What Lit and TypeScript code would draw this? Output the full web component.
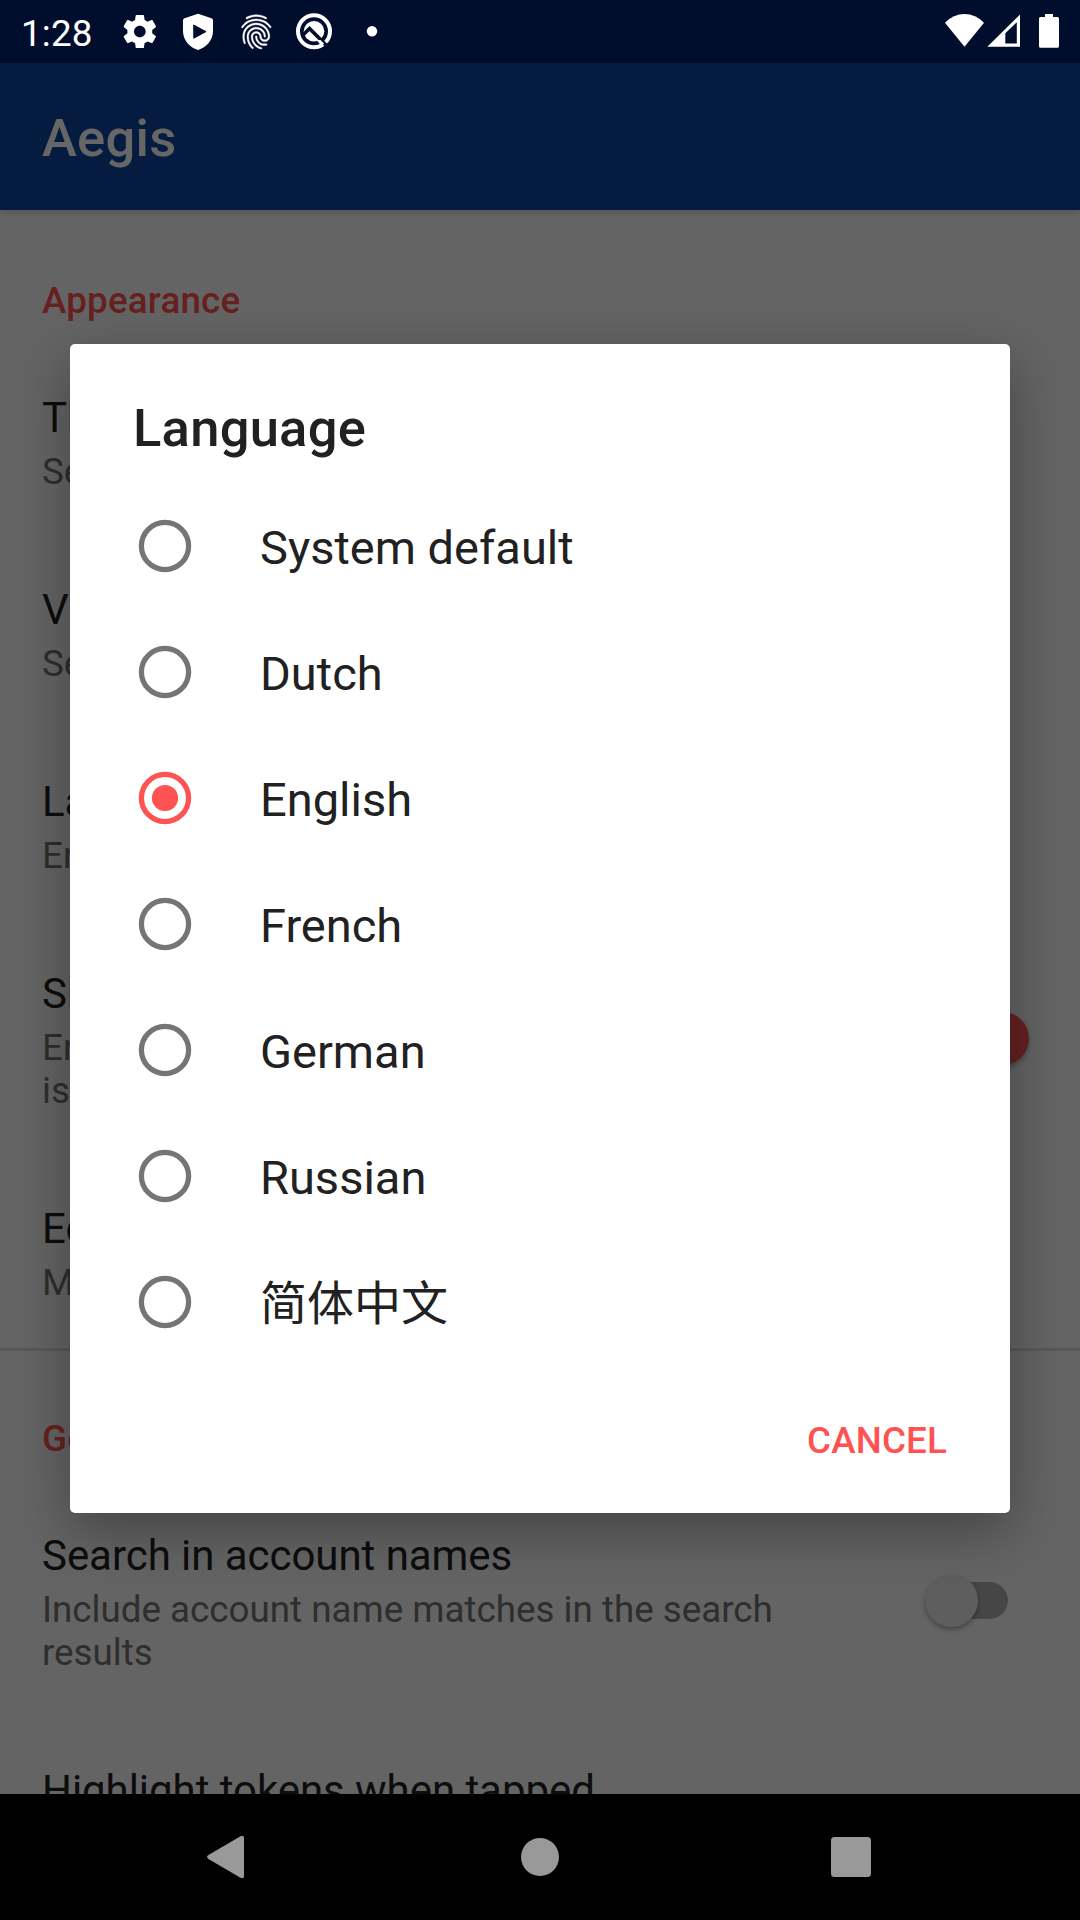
import { LitElement, html, svg, css, nothing } from "lit";
import { customElement, property, state } from "lit/decorators.js";

const FONT = css`Roboto, "Noto Sans CJK SC", sans-serif`;

interface Pref {
  title: string;
  summary?: string;
  toggle?: "on" | "off";
}

const APPEARANCE: Pref[] = [
  { title: "Theme", summary: "Select a theme" },
  { title: "View mode", summary: "Select a view mode" },
  { title: "Language", summary: "English" },
  {
    title: "Show the account name",
    summary: "Enable this to show the name next to the issuer",
    toggle: "on",
  },
  { title: "Edit groups", summary: "Manage your groups" },
];

const GENERAL: Pref[] = [
  {
    title: "Search in account names",
    summary: "Include account name matches in the search results",
    toggle: "off",
  },
  { title: "Highlight tokens when tapped" },
];

const LANGUAGES = ["System default", "Dutch", "English", "French", "German", "Russian", "简体中文"];

@customElement("status-bar")
export class StatusBar extends LitElement {
  static styles = css`
    :host {
      display: flex;
      align-items: flex-start;
      justify-content: space-between;
      height: 63px;
      color: #fff;
      font-family: ${FONT};
    }
    .clock {
      font-size: 36.75px;
      line-height: 43px;
      padding: 12px 0 0 21px;
      width: 91px;
      letter-spacing: 0.2px;
    }
    .group {
      display: flex;
    }
    svg {
      display: block;
      fill: #fff;
    }
  `;

  render() {
    return html`
      <div class="group">
        <div class="clock">1:28</div>
        <svg width="280" height="63" viewBox="112 0 280 63">
          <g transform="translate(119.9 11.6) scale(1.66)">
            <path
              d="M19.43 12.98c.04-.32.07-.64.07-.98s-.03-.66-.07-.98l2.11-1.65c.19-.15.24-.42.12-.64l-2-3.46c-.12-.22-.39-.3-.61-.22l-2.49 1c-.52-.4-1.08-.73-1.69-.98l-.38-2.65C14.46 2.18 14.25 2 14 2h-4c-.25 0-.46.18-.49.42l-.38 2.65c-.61.25-1.17.59-1.69.98l-2.49-1c-.23-.09-.49 0-.61.22l-2 3.46c-.13.22-.07.49.12.64l2.11 1.65c-.04.32-.07.65-.07.98s.03.66.07.98l-2.11 1.65c-.19.15-.24.42-.12.64l2 3.46c.12.22.39.3.61.22l2.49-1c.52.4 1.08.73 1.69.98l.38 2.65c.03.24.24.42.49.42h4c.25 0 .46-.18.49-.42l.38-2.65c.61-.25 1.17-.59 1.69-.98l2.49 1c.23.09.49 0 .61-.22l2-3.46c.12-.22.07-.49-.12-.64l-2.11-1.65zM12 15.5c-1.93 0-3.5-1.57-3.5-3.5s1.57-3.5 3.5-3.5 3.5 1.57 3.5 3.5-1.57 3.5-3.5 3.5z"
            />
          </g>
          <path
            fill-rule="evenodd"
            d="M198 13.7 211.5 18.3Q213 18.9 213 20.4V31C213 40 206.5 47.5 198 50C189.500 47.5 183 40 183 31V20.400Q183 18.900 184.500 18.300ZM193.200 25.300V37.900Q193.200 38.900 194.100 38.400L205.800 32.200Q206.700 31.600 205.800 31L194.100 24.800Q193.200 24.300 193.200 25.300Z"
          />
          <g transform="translate(236.500 11.300) scale(1.650 1.720)" stroke="#fff" stroke-width=".22">
            <path
              d="M17.810 4.470c-.080 0-.160-.020-.230-.060C15.660 3.420 14 3 12.010 3c-1.980 0-3.860.470-5.570 1.410-.240.130-.540.040-.680-.200-.130-.240-.040-.550.200-.680C7.820 2.520 9.860 2 12.010 2c2.130 0 3.990.470 6.030 1.520.250.130.340.430.210.670-.090.180-.260.280-.440.280zM3.500 9.720c-.100 0-.200-.030-.290-.090-.230-.160-.280-.470-.120-.700.990-1.400 2.250-2.500 3.750-3.270C9.980 4.040 14 4.030 17.150 5.650c1.500.770 2.760 1.860 3.750 3.250.160.220.110.540-.120.700-.230.160-.540.110-.700-.120-.900-1.260-2.040-2.250-3.390-2.940-2.870-1.470-6.540-1.470-9.400.010-1.360.700-2.500 1.700-3.400 2.960-.080.140-.230.210-.390.210zm6.250 12.070c-.130 0-.260-.050-.350-.150-.870-.870-1.340-1.430-2.010-2.640-.690-1.230-1.050-2.730-1.050-4.340 0-2.970 2.540-5.390 5.660-5.390s5.660 2.420 5.660 5.390c0 .280-.220.500-.500.500s-.500-.220-.500-.500c0-2.420-2.090-4.390-4.660-4.390-2.570 0-4.660 1.970-4.660 4.390 0 1.440.320 2.770.930 3.850.640 1.150 1.080 1.640 1.850 2.420.190.200.190.510 0 .710-.110.100-.240.150-.370.150zm7.170-1.850c-1.190 0-2.240-.300-3.100-.890-1.490-1.010-2.380-2.650-2.380-4.390 0-.280.220-.500.500-.500s.500.220.500.500c0 1.410.720 2.740 1.940 3.560.710.480 1.540.710 2.540.710.240 0 .640-.030 1.040-.100.270-.050.530.130.580.410.050.270-.130.530-.410.580-.570.110-1.070.120-1.210.120zM14.910 22c-.040 0-.090-.010-.130-.020-1.590-.440-2.630-1.030-3.720-2.100-1.400-1.390-2.170-3.240-2.170-5.220 0-1.620 1.380-2.940 3.080-2.940 1.700 0 3.080 1.320 3.080 2.940 0 1.070.930 1.940 2.080 1.940s2.080-.870 2.080-1.940c0-3.770-3.250-6.830-7.250-6.830-2.840 0-5.440 1.580-6.610 4.030-.390.810-.590 1.760-.590 2.800 0 .780.070 2.010.670 3.610.100.260-.030.550-.290.640-.260.100-.550-.040-.640-.290-.490-1.310-.730-2.610-.730-3.960 0-1.200.230-2.290.680-3.240 1.330-2.790 4.280-4.600 7.510-4.600 4.550 0 8.250 3.510 8.250 7.830 0 1.620-1.380 2.940-3.080 2.940s-3.080-1.320-3.080-2.940c0-1.070-.930-1.940-2.080-1.940s-2.080.870-2.080 1.940c0 1.710.660 3.310 1.870 4.510.950.940 1.860 1.460 3.270 1.850.270.070.420.350.350.610-.050.230-.260.380-.470.380z"
            />
          </g>
          <circle cx="314" cy="31.300" r="16" fill="none" stroke="#fff" stroke-width="4" />
          <circle cx="314" cy="31.300" r="10.300" />
          <path d="M302.500 35.500 309.500 28.500 328 47" fill="none" stroke="#000d2b" stroke-width="3.600" />
          <path d="M316.500 40 320.500 40 324 43.500 321.500 46Z" />
          <circle cx="372" cy="31.200" r="5.200" />
        </svg>
      </div>
      <svg width="140" height="63" viewBox="940 0 140 63">
        <path d="M964.500 46.700 945 22.700Q953.500 14 964.500 14T984 22.700Z" />
        <path fill-rule="evenodd" d="M987.300 46.800 1020 14.500V46.800ZM1005.300 33.200V43.500H1016.800V22.300Z" />
        <path
          d="M1045 14H1053V17H1057.500Q1059 17 1059 18.500V46.200Q1059 47.800 1057.500 47.800H1040.500Q1039 47.800 1039 46.200V18.500Q1039 17 1040.500 17H1045Z"
        />
      </svg>
    `;
  }
}

@customElement("pref-row")
export class PrefRow extends LitElement {
  @property({ attribute: false }) pref!: Pref;

  static styles = css`
    :host {
      display: flex;
      align-items: center;
      padding: 46px 48px 46px 42px;
      font-family: ${FONT};
    }
    .text {
      display: flex;
      flex-direction: column;
      gap: 8px;
      width: 740px;
      flex: none;
    }
    .title {
      font-size: 42px;
      line-height: 49px;
      color: #212121;
      white-space: nowrap;
      letter-spacing: -0.05px;
    }
    .summary {
      font-size: 36.75px;
      line-height: 43px;
      color: #737373;
    }
    .switch {
      display: flex;
      align-items: center;
      justify-content: center;
      width: 62px;
      height: 37px;
      border-radius: 19px;
      background: #afafaf;
      margin: 0 24px 5px auto;
    }
    .thumb {
      flex: none;
      width: 53px;
      height: 53px;
      border-radius: 50%;
      background: #ececec;
      box-shadow: 0 3px 5px rgba(0, 0, 0, 0.3);
      transform: translateX(-26px);
    }
    .on {
      background: #ffa9a9;
    }
    .on .thumb {
      background: #ff5252;
      transform: translateX(25px);
    }
  `;

  render() {
    const { title, summary, toggle } = this.pref;
    return html`
      <div class="text">
        <div class="title">${title}</div>
        ${summary ? html`<div class="summary">${summary}</div>` : nothing}
      </div>
      ${toggle ? html`<div class="switch ${toggle}"><div class="thumb"></div></div>` : nothing}
    `;
  }
}

@customElement("language-dialog")
export class LanguageDialog extends LitElement {
  @state() private selected = "English";

  static styles = css`
    :host {
      display: flex;
      flex-direction: column;
      box-sizing: border-box;
      width: 940px;
      height: 1169px;
      border-radius: 5px;
      background: #fff;
      box-shadow: 0 18px 56px rgba(0, 0, 0, 0.32);
      font-family: ${FONT};
      color: #212121;
    }
    .heading {
      margin: 0;
      padding: 53px 63px 24px;
      font-size: 52.5px;
      line-height: 62px;
      font-weight: 500;
      letter-spacing: 0.25px;
    }
    .option {
      display: flex;
      align-items: center;
      height: 126px;
      padding-left: 68px;
      gap: 68px;
      cursor: pointer;
    }
    .option svg {
      display: block;
      flex: none;
      fill: none;
      stroke: #757575;
      stroke-width: 5.25px;
    }
    .option .checked {
      stroke: #ff5252;
    }
    .dot {
      fill: #ff5252;
      stroke: none;
    }
    .label {
      font-size: 47px;
      line-height: 56px;
      padding-top: 4px;
    }
    .actions {
      display: flex;
      justify-content: flex-end;
      margin-top: auto;
      padding: 0 63px 51px 0;
    }
    .cancel {
      font: inherit;
      font-size: 36.75px;
      line-height: 43px;
      font-weight: 500;
      letter-spacing: 0.15px;
      color: #ff5252;
      background: none;
      border: 0;
      padding: 0;
    }
  `;

  private renderOption(name: string) {
    const on = name === this.selected;
    return html`
      <div class="option" @click=${() => (this.selected = name)}>
        <svg class=${on ? "checked" : ""} width="54" height="54" viewBox="0 0 54 54">
          <circle cx="27" cy="27" r="23.600" />
          ${on ? svg`<circle class="dot" cx="27" cy="27" r="13.100" />` : nothing}
        </svg>
        <div class="label">${name}</div>
      </div>
    `;
  }

  render() {
    return html`
      <h2 class="heading">Language</h2>
      ${LANGUAGES.map((name) => this.renderOption(name))}
      <div class="actions"><button class="cancel">CANCEL</button></div>
    `;
  }
}

@customElement("app-root")
export class AppRoot extends LitElement {
  static styles = css`
    :host {
      display: block;
      position: relative;
      width: 1080px;
      height: 1920px;
      overflow: hidden;
      background: #000;
      font-family: ${FONT};
    }
    .screen {
      display: flex;
      flex-direction: column;
      height: 1794px;
      overflow: hidden;
      background: #fafafa;
    }
    .status-back {
      flex: none;
      height: 63px;
      background: #002171;
    }
    .toolbar {
      flex: none;
      display: flex;
      align-items: center;
      height: 147px;
      padding: 3px 42px 0;
      box-sizing: border-box;
      background: #0d47a1;
      color: #fff;
      font-size: 52.5px;
      font-weight: 500;
      letter-spacing: 0.3px;
      box-shadow: 0 2px 7px rgba(0, 0, 0, 0.18);
    }
    .category {
      padding: 69px 42px 25px;
      font-size: 36.75px;
      line-height: 43px;
      font-weight: 500;
      letter-spacing: 0.2px;
      color: #ff5252;
    }
    .section {
      flex: none;
    }
    .section + .section {
      margin-top: -2px;
      border-top: 3px solid #dcdcdc;
    }
    .section + .section .category {
      padding-top: 66px;
    }
    .scrim {
      position: absolute;
      inset: 0 0 126px;
      background: rgba(0, 0, 0, 0.6);
    }
    .status {
      position: absolute;
      inset: 0 0 auto;
    }
    .dialog {
      position: absolute;
      top: 344px;
      left: 70px;
    }
    .nav {
      display: flex;
      align-items: center;
      justify-content: space-between;
      height: 126px;
      padding: 0 208px 0 206px;
      box-sizing: border-box;
    }
    .nav svg {
      display: block;
      fill: #999;
    }
  `;

  private renderSection(name: string, prefs: Pref[]) {
    return html`
      <section class="section">
        <div class="category">${name}</div>
        ${prefs.map((pref) => html`<pref-row .pref=${pref}></pref-row>`)}
      </section>
    `;
  }

  render() {
    return html`
      <div class="screen">
        <div class="status-back"></div>
        <header class="toolbar">Aegis</header>
        ${this.renderSection("Appearance", APPEARANCE)} ${this.renderSection("General", GENERAL)}
      </div>
      <div class="scrim"></div>
      <status-bar class="status"></status-bar>
      <language-dialog class="dialog"></language-dialog>
      <nav class="nav">
        <svg width="40" height="44" viewBox="0 0 40 44">
          <path d="M2 20.300 34.500 1.200Q38 -.300 38 3V41Q38 44.300 34.500 42.800L2 23.700Q.200 22 2 20.300Z" />
        </svg>
        <svg width="40" height="40" viewBox="0 0 40 40"><circle cx="21" cy="20" r="19" /></svg>
        <svg width="41" height="40" viewBox="0 0 41 40"><rect width="40" height="40" rx="3.500" /></svg>
      </nav>
    `;
  }
}
